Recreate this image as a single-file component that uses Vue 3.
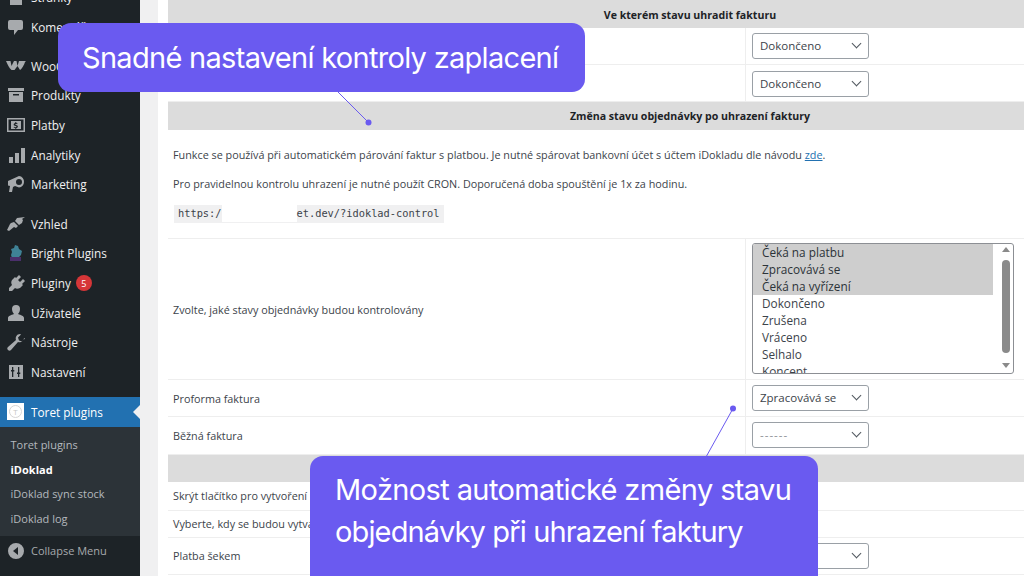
<script setup>
const menu = [
  { label: 'Stránky', icon: 'page' },
  { label: 'Komentáře', icon: 'comment' },
  { label: 'WooCommerce', icon: 'woo', sep: true },
  { label: 'Produkty', icon: 'box' },
  { label: 'Platby', icon: 'pay' },
  { label: 'Analytiky', icon: 'bars' },
  { label: 'Marketing', icon: 'mega' },
  { label: 'Vzhled', icon: 'brush', sep: true },
  { label: 'Bright Plugins', icon: 'bright' },
  { label: 'Pluginy', icon: 'plug', badge: 5 },
  { label: 'Uživatelé', icon: 'user' },
  { label: 'Nástroje', icon: 'wrench' },
  { label: 'Nastavení', icon: 'sliders' }
]
const sub = [
  { label: 'Toret plugins' },
  { label: 'iDoklad', active: true },
  { label: 'iDoklad sync stock' },
  { label: 'iDoklad log' }
]
const options = ['Čeká na platbu', 'Zpracovává se', 'Čeká na vyřízení', 'Dokončeno', 'Zrušena', 'Vráceno', 'Selhalo', 'Koncept']
</script>

<template>
  <div class="page">
    <aside class="side">
      <ul class="menu">
        <li v-for="m in menu" :key="m.label" class="item" :class="{ sep: m.sep }">
          <span class="ic">
            <svg width="20" height="20" viewBox="0 0 20 20" fill="#a7aaad">
              <path v-if="m.icon === 'page'" d="M4 2h9l3 3v13H4z" />
              <path v-else-if="m.icon === 'comment'" d="M4 3h11a2 2 0 0 1 2 2v6a2 2 0 0 1-2 2h-3l-4 5v-5H4a2 2 0 0 1-2-2V5a2 2 0 0 1 2-2z" />
              <path v-else-if="m.icon === 'woo'" d="M0 5h4.500l1 5 2.500-5h2.500l1 5 1.500-5H20l-1 1c-1 3-3 7-5 8l-2.500-4-3 4H5.500C3 12 1.500 8 0 5z" />
              <path v-else-if="m.icon === 'box'" d="M2 3h16v3H2zM3 7h14v10H3zm4 2v1.500h6V9z" fill-rule="evenodd" />
              <path v-else-if="m.icon === 'pay'" d="M1 3h18v14H1zm1.500 1.500v11h15v-11zM5 6h10v8H5zm4.300 1v1c-1 .2-1.600.8-1.600 1.500 0 1 .8 1.300 1.800 1.600.7.200 1 .3 1 .6 0 .3-.4.500-1 .5-.5 0-1-.2-1.500-.5l-.4.900c.5.300 1 .5 1.700.5v1h1v-1c1-.2 1.600-.8 1.600-1.600 0-1-.8-1.300-1.800-1.600-.7-.2-1-.3-1-.6 0-.3.300-.4.800-.4s1 .1 1.300.3l.4-.9c-.4-.2-.9-.3-1.300-.4V7z" fill-rule="evenodd" />
              <path v-else-if="m.icon === 'bars'" d="M3 12h4v6H3zM9 8h4v10H9zM15 3h4v15h-4z" />
              <path v-else-if="m.icon === 'mega'" fill-rule="evenodd" d="M18 8a5.500 5.500 0 0 1-5 5.500L9 12l-2 1-1 5H3l1-6-2-.5V7l11-5a5.500 5.500 0 0 1 5 6zm-5-3a3 3 0 1 0 0 6 3 3 0 0 0 0-6z" />
              <path v-else-if="m.icon === 'brush'" d="M19 3l-8 1-2 3 4 4 3-2 1-3-1-1 3-2zM8 8l4 4-2 2-2-1-5 4-2-1 3-6 1-1z" />
              <path v-else-if="m.icon === 'plug'" d="M13 2l2 2-3 3 2 2 3-3 2 2-3 3 1 1-3 3c-2 1-4 1-5 0l-3 3H3v-3l3-3c-1-2-1-3 0-5l3-3 1 1z" />
              <path v-else-if="m.icon === 'user'" d="M10 2a4 4 0 0 1 4 4c0 2-1 4-2 5 3 1 6 2 6 4v3H2v-3c0-2 3-3 6-4-1-1-2-3-2-5a4 4 0 0 1 4-4z" />
              <path v-else-if="m.icon === 'wrench'" d="M18 6c0 3-3 5-6 4l-7 8c-1 1-2 1-3 0s-1-2 0-3l8-7c-1-3 1-6 4-6l1 .5-3 3 1 3 3 1 3-3z" />
              <path v-else-if="m.icon === 'sliders'" d="M3 3h14v14H3zm3 2v3H5v1.500h1V15h1.300V9.500h1V8h-1V5zm6 0v5.500h-1V12h1v3h1.300v-3h1v-1.500h-1V5z" fill-rule="evenodd" />
              <g v-else-if="m.icon === 'bright'">
                <path fill="#3f8296" d="M5 6l3-1 1-3 3 1 1 3 3 2-1 4-3 3H6l-1-3 1-3z" />
                <path fill="#4a2f6b" d="M4 14h11v4H4z" />
              </g>
            </svg>
          </span>
          <span class="lbl">{{ m.label }}</span>
          <span v-if="m.badge" class="badge">{{ m.badge }}</span>
        </li>
      </ul>
      <div class="current">
        <span class="logo"><span class="logo-t">T</span></span>
        <span class="lbl cur-lbl">Toret plugins</span>
        <span class="arrow"></span>
      </div>
      <ul class="submenu">
        <li v-for="s in sub" :key="s.label" :class="{ on: s.active }">{{ s.label }}</li>
      </ul>
      <div class="collapse">
        <svg width="16" height="16" viewBox="0 0 16 16"><path fill="#a7aaad" fill-rule="evenodd" d="M8 0a8 8 0 1 1 0 16A8 8 0 0 1 8 0zm2 4L5 8l5 4z" /></svg>
        <span>Collapse Menu</span>
      </div>
    </aside>

    <main class="main">
      <div class="head h1">Ve kterém stavu uhradit fakturu</div>
      <div class="row r37"><div class="l"></div><div class="v"><div class="sel">Dokončeno<i class="chev"></i></div></div></div>
      <div class="row r37"><div class="l"></div><div class="v lowv"><div class="sel">Dokončeno<i class="chev"></i></div></div></div>
      <div class="head h2">Změna stavu objednávky po uhrazení faktury</div>
      <div class="desc">
        <p>Funkce se používá při automatickém párování faktur s platbou. Je nutné spárovat bankovní účet s účtem iDokladu dle návodu <a>zde</a>.</p>
        <p>Pro pravidelnou kontrolu uhrazení je nutné použít CRON. Doporučená doba spouštění je 1x za hodinu.</p>
        <code>https:/<span class="blank"></span>et.dev/?idoklad-control</code>
      </div>
      <div class="row big">
        <div class="l">Zvolte, jaké stavy objednávky budou kontrolovány</div>
        <div class="v highv">
          <div class="multi">
            <div class="opts">
              <div v-for="(o, i) in options" :key="o" class="opt" :class="{ picked: i < 3 }">{{ o }}</div>
            </div>
            <div class="sb"><span class="up"></span><span class="thumb"></span><span class="down"></span></div>
          </div>
        </div>
      </div>
      <div class="row r375"><div class="l">Proforma faktura</div><div class="v"><div class="sel">Zpracovává se<i class="chev"></i></div></div></div>
      <div class="row r375"><div class="l lowl">Běžná faktura</div><div class="v"><div class="sel dim">------<i class="chev"></i></div></div></div>
      <div class="head h3"></div>
      <div class="row r29"><div class="l">Skrýt tlačítko pro vytvoření</div><div class="v"></div></div>
      <div class="row r275"><div class="l">Vyberte, kdy se budou vytvářet</div><div class="v"></div></div>
      <div class="row r365"><div class="l">Platba šekem</div><div class="v"><div class="sel">Zrušena<i class="chev"></i></div></div></div>
    </main>

    <svg class="lines" width="1024" height="576" viewBox="0 0 1024 576">
      <line x1="337" y1="91" x2="368.500" y2="122.500" stroke="#6a5af0" stroke-width="1" />
      <circle cx="368.500" cy="122.500" r="3" fill="#6a5af0" />
      <line x1="706" y1="457" x2="733" y2="408.500" stroke="#6a5af0" stroke-width="1" />
      <circle cx="733" cy="408.500" r="3" fill="#6a5af0" />
    </svg>
    <div class="note n1">Snadné nastavení kontroly zaplacení</div>
    <div class="note n2">Možnost automatické změny stavu<br /><span class="tight">objednávky při uhrazení faktury</span></div>
  </div>
</template>

<style scoped>
.page {
  position: relative;
  width: 1024px;
  height: 576px;
  overflow: hidden;
  display: flex;
  background: #f0f0f1;
  font-family: "Open Sans", "Noto Sans", sans-serif;
}
.side {
  width: 140px;
  height: 576px;
  flex: none;
  background: #1d2327;
  color: #f0f0f1;
  font-size: 11.800px;
  overflow: hidden;
}
.menu { list-style: none; margin: -18px 0 0; padding: 0; }
.item { display: flex; align-items: center; height: 29.700px; }
.item.sep { margin-top: 9.500px; }
.ic { width: 31px; flex: none; display: flex; justify-content: center; }
.lbl { white-space: nowrap; }
.badge {
  margin-left: 5px;
  width: 16px; height: 16px; border-radius: 50%;
  background: #d63638; color: #fff; font-size: 9px;
  display: flex; align-items: center; justify-content: center;
}
.current {
  position: relative;
  height: 30px;
  margin-top: 9.900px;
  background: #2271b1;
  display: flex;
  align-items: center;
  color: #fff;
}
.logo {
  width: 17px; height: 17px; margin: 0 7px;
  background: #fff;
  display: flex; align-items: center; justify-content: center;
  flex: none;
}
.logo-t {
  width: 13px; height: 13px; border: 1px solid #d5d5d5; border-radius: 50%;
  color: #c6c6c6; font-size: 8px; line-height: 12px; text-align: center;
  box-sizing: border-box;
}
.cur-lbl { color: #fff; }
.arrow {
  position: absolute; right: 0; top: 8px;
  border: 7px solid transparent; border-right-color: #f0f0f1; border-left: 0;
}
.submenu {
  list-style: none; margin: 0; padding: 6px 0 4.200px 10.500px;
  background: #2c3338;
  color: #b4b9be;
  font-size: 11px;
}
.submenu li { height: 24.700px; line-height: 24.700px; white-space: nowrap; }
.submenu li.on { color: #fff; font-weight: 700; }
.collapse {
  display: flex; align-items: center; gap: 7px;
  height: 30px; padding: 0 0 0 8px;
  color: #a7aaad; font-size: 11px;
}
.main {
  margin-left: 28px;
  flex: 1;
  background: #fff;
  min-width: 0;
  box-shadow: -10px 0 0 #fff;
  font-size: 10.800px;
  color: #3c434a;
}
.head {
  background: #dcdcdc;
  color: #1d2327;
  font-weight: 700;
  font-size: 10.600px;
  display: flex; align-items: center; justify-content: center;
  padding-left: 188px;
  box-sizing: border-box;
}
.h1 { height: 28px; padding-top: 2px; }
.h2 { height: 28px; }
.h3 { height: 27px; }
.row { display: flex; border-bottom: 1px solid #eeeeee; box-sizing: border-box; }
.r37 { height: 37px; }
.r375 { height: 37.250px; }
.r29 { height: 29px; }
.r275 { height: 27.500px; }
.r365 { height: 36.500px; }
.big { height: 142px; border-top: 1px solid #eee; }
.l { width: 578px; flex: none; padding: 0 0 0 5px; box-sizing: border-box; display: flex; align-items: center; border-right: 1px solid #eeeeee; }
.lowl { padding-top: 1px; }
.v { flex: 1; display: flex; align-items: center; padding-left: 6px; min-width: 0; }
.lowv { padding-top: 1px; }
.highv { padding-bottom: 2px; }
.sel {
  position: relative;
  width: 117px; height: 26px;
  box-sizing: border-box;
  border: 1px solid #9aa0a6;
  border-radius: 3px;
  padding-left: 7px;
  font-size: 11.500px;
  line-height: 24px;
  color: #3c434a;
  background: #fff;
}
.sel.dim { color: #8c8f94; letter-spacing: 1px; }
.chev {
  position: absolute; right: 8px; top: 6px;
  width: 6px; height: 6px;
  border-right: 1.500px solid #50575e;
  border-bottom: 1.500px solid #50575e;
  transform: rotate(45deg);
}
.desc { height: 108px; box-sizing: border-box; padding: 17px 0 0 5px; }
.desc p { margin: 0 0 14px; line-height: 15px; height: 15px; }
.desc a { color: #2271b1; text-decoration: underline; }
code {
  display: inline-block;
  margin: -3px 0 0 1px;
  background: #f0f0f1;
  padding: 0 4px 1px;
  font-family: "DejaVu Sans Mono", "Liberation Mono", monospace;
  font-size: 10.330px;
  line-height: 16px;
  color: #3c434a;
}
.blank { display: inline-block; width: 75px; height: 17px; background: #fff; vertical-align: top; }
.multi {
  width: 262px; height: 131px;
  box-sizing: border-box;
  border: 1px solid #8c8f94;
  border-radius: 3px;
  display: flex;
  overflow: hidden;
  background: #fff;
}
.opts { width: 240px; flex: none; font-size: 11.800px; overflow: hidden; }
.opt { height: 17px; line-height: 17px; padding-left: 9px; white-space: nowrap; color: #3c434a; }
.opt.picked { background: #cecece; color: #2c3338; }
.sb { flex: 1; position: relative; }
.thumb { position: absolute; left: 9px; right: 3px; top: 16px; height: 93px; background: #8a8a8a; border-radius: 4px; }
.up, .down { position: absolute; left: 9px; border: 4px solid transparent; }
.up { top: 3px; border-top: 0; border-bottom: 5px solid #8a8a8a; }
.down { bottom: 5px; border-bottom: 0; border-top: 5px solid #8a8a8a; }
.lines { position: absolute; left: 0; top: 0; pointer-events: none; }
.note {
  position: absolute;
  background: #6a5af0;
  color: #fff;
  font-family: Inter, "Noto Sans", sans-serif;
  border-radius: 13px;
  box-sizing: border-box;
  white-space: nowrap;
}
.n1 { left: 58px; top: 23px; width: 527px; height: 69px; font-size: 29px; letter-spacing: -0.700px; line-height: 69px; padding-left: 24px; }
.n2 { left: 310px; top: 456px; width: 508px; height: 134px; font-size: 29px; letter-spacing: -0.620px; line-height: 42px; padding: 13px 0 0 25px; }
.tight { letter-spacing: -0.850px; }
</style>
